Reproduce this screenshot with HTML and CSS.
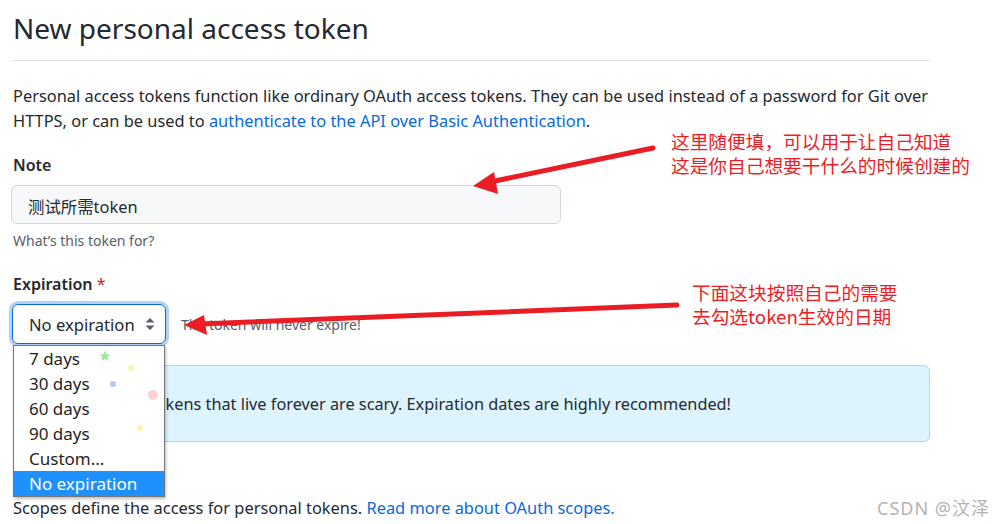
FILE: index.html
```html
<!DOCTYPE html>
<html lang="en">
<head>
<meta charset="utf-8">
<title>New personal access token</title>
<link rel="stylesheet" href="styles.css">
</head>
<body>
<div class="page">
  <h1 class="heading">New personal access token</h1>
  <p class="intro">Personal access tokens function like ordinary OAuth access tokens. They can be used instead of a password for Git over HTTPS, or can be used to <a class="link" href="#">authenticate to the API over Basic Authentication</a>.</p>

  <div class="group group-note">
    <label class="label">Note</label>
    <div class="input">测试所需token</div>
    <div class="hint">What’s this token for?</div>
  </div>

  <div class="group group-exp">
    <label class="label">Expiration <span class="req">*</span></label>
    <div class="exp-row">
      <div class="select-wrap">
        <div class="select">
          <span>No expiration</span>
          <svg class="caret" width="10" height="14" viewBox="0 0 10 14"><path d="M5 1 L9.5 5.5 H0.5 Z M5 13 L9.5 8.5 H0.5 Z" fill="#57606a"/></svg>
        </div>
        <ul class="menu">
          <li>7 days</li>
          <li>30 days</li>
          <li>60 days</li>
          <li>90 days</li>
          <li>Custom...</li>
          <li class="sel">No expiration</li>
        </ul>
      </div>
      <span class="exp-note">The token will never expire!</span>
    </div>
  </div>

  <div class="flash">
    <span>Personal access tokens that live forever are scary. Expiration dates are highly recommended!</span>
  </div>

  <p class="scopes">Scopes define the access for personal tokens. <a class="link" href="#">Read more about OAuth scopes.</a></p>

  <div class="sparkles">
    <svg class="star" width="12" height="12" viewBox="0 0 12 12"><path d="M6 0.5 L7.5 4.3 L11.5 4.5 L8.4 7 L9.5 11 L6 8.7 L2.5 11 L3.6 7 L0.5 4.5 L4.5 4.3 Z" fill="#9be89b"/></svg>
    <span class="dot d1"></span>
    <span class="dot d2"></span>
    <span class="dot d3"></span>
    <span class="dot d4"></span>
  </div>

  <svg class="arrows" width="1003" height="524" viewBox="0 0 1003 524">
    <line x1="653" y1="148" x2="490" y2="182" stroke="#ea1c24" stroke-width="5" stroke-linecap="round"/>
    <polygon points="473,186 494,172 498,194" fill="#ea1c24"/>
    <line x1="677" y1="305" x2="200" y2="324" stroke="#ea1c24" stroke-width="5" stroke-linecap="round"/>
    <polygon points="184,325 204,315 207,335" fill="#ea1c24"/>
  </svg>

  <div class="annot annot-1">这里随便填，可以用于让自己知道<br>这是你自己想要干什么的时候创建的</div>
  <div class="annot annot-2">下面这块按照自己的需要<br>去勾选token生效的日期</div>

  <div class="watermark">CSDN @汶泽</div>
</div>
</body>
</html>
```

FILE: styles.css
```css
html, body {
  margin: 0;
  padding: 0;
  background: #ffffff;
}
body {
  font-family: "Noto Sans", "Noto Sans CJK SC", sans-serif;
  color: #24292f;
  font-size: 16.4px;
  overflow: hidden;
}
.page {
  position: relative;
  width: 917px;
  height: 524px;
  padding: 0 73px 0 13px;
}
.heading {
  margin: 0;
  padding-top: 8px;
  padding-bottom: 12px;
  font-size: 28px;
  line-height: 40px;
  font-weight: 400;
  border-bottom: 1px solid #d8dee4;
}
.intro {
  margin: 22px 0 0;
  font-size: 16.4px;
  line-height: 25px;
}
.link {
  color: #0969da;
  text-decoration: none;
}
.group-note {
  margin-top: 22px;
}
.label {
  display: block;
  font-weight: 600;
  font-size: 16px;
  line-height: 20px;
}
.input {
  margin-top: 10px;
  margin-left: -2px;
  width: 532px;
  height: 37px;
  box-sizing: content-box;
  padding: 0 0 0 16px;
  border: 1px solid #d0d7de;
  border-radius: 6px;
  background: #f6f8fa;
  font-size: 16.4px;
  line-height: 41px;
}
.hint {
  margin-top: 8px;
  font-size: 14px;
  line-height: 18px;
  color: #57606a;
}
.group-exp {
  margin-top: 24px;
}
.req {
  color: #cf222e;
  font-weight: 400;
}
.exp-row {
  margin-top: 10px;
  display: flex;
  align-items: center;
  gap: 15px;
}
.select-wrap {
  position: relative;
  margin-left: -1px;
}
.select {
  box-sizing: border-box;
  width: 154px;
  height: 40px;
  border: 1px solid #0969da;
  border-radius: 6px;
  box-shadow: 0 0 0 3px rgba(9, 105, 218, 0.3);
  display: flex;
  align-items: center;
  justify-content: space-between;
  padding: 0 10px 0 16px;
  font-size: 16.6px;
}
.menu {
  position: absolute;
  left: 1px;
  top: 41px;
  width: 150px;
  margin: 0;
  padding: 0;
  list-style: none;
  background: #ffffff;
  border: 1px solid #767676;
  box-shadow: 1px 2px 3px rgba(0, 0, 0, 0.25);
  z-index: 5;
}
.menu li {
  height: 25px;
  line-height: 25px;
  padding-left: 15px;
  font-size: 17px;
  color: #1f1f1f;
}
.menu li.sel {
  background: #1e90ff;
  color: #ffffff;
}
.exp-note {
  font-size: 14px;
  color: #57606a;
}
.flash {
  margin-top: 21px;
  height: 75px;
  border: 1px solid #a9d8ff;
  border-radius: 6px;
  background: #ddf4ff;
  display: flex;
  align-items: center;
  padding-left: 11px;
  font-size: 16.3px;
}
.scopes {
  margin: 54px 0 0;
  line-height: 24px;
  font-size: 16.4px;
}
.sparkles .star {
  position: absolute;
  left: 99px;
  top: 350px;
  z-index: 6;
}
.dot {
  position: absolute;
  border-radius: 50%;
  z-index: 6;
}
.d1 { left: 128px; top: 365px; width: 6px; height: 6px; background: #f7f7b0; }
.d2 { left: 110px; top: 381px; width: 6px; height: 6px; background: #b9c8f7; }
.d3 { left: 148px; top: 390px; width: 10px; height: 10px; background: #fbd2d2; }
.d4 { left: 137px; top: 425px; width: 6px; height: 6px; background: #f7f7b0; }
.arrows {
  position: absolute;
  left: 0;
  top: 0;
  z-index: 10;
  pointer-events: none;
}
.annot {
  position: absolute;
  color: #ee1c25;
  font-family: "Noto Sans CJK SC", sans-serif;
  font-size: 18.7px;
  line-height: 24px;
  z-index: 11;
  white-space: nowrap;
}
.annot-1 { left: 671px; top: 129px; }
.annot-2 { left: 692px; top: 280px; }
.watermark {
  position: absolute;
  left: 877px;
  top: 494px;
  font-family: "Noto Sans", "Noto Sans CJK SC", sans-serif;
  font-size: 18px;
  letter-spacing: 1px;
  color: #b4b4b4;
  z-index: 11;
  white-space: nowrap;
}
```
